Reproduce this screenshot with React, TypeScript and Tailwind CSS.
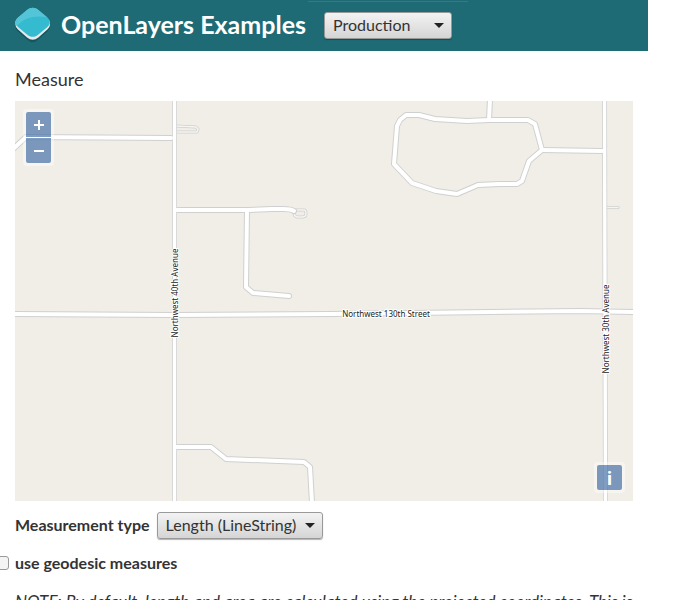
import type { ReactNode } from "react";

const halo = {
  fontFamily: '"Noto Sans", sans-serif',
  paintOrder: "stroke",
} as const;

const majorRoads = [
  "M174.5 101V501",
  "M604.5 101L605.5 501",
];

const roads = [
  "M12 150L26 137L171 138",
  "M15 314L174 315L330 314L580 311L633 312",
  "M177 210H247L272 209H283Q291 209 294 211",
  "M247 210L246 287L253 293L289 296",
  "M406 115H419L435 119L467 121L489 120L528 120L535 124L542 150L529 161L522 181L517 184L499 184L478 185L457 194L436 191L412 183L394 164L397 126L400 120Z",
  "M490 99L489 120",
  "M542 150L602 151",
  "M177 447L211 447L226 459L304 462L310 467L312 503",
];

const tracks = [
  "M176 126L196 127L198 129L197 132H176",
  "M296 210H304Q306 210 306 214Q306 217 302 217H297Q294 216 294 213Z",
  "M606 207.5H618",
];

function Roads() {
  return (
    <svg
      viewBox="15 101 618 400"
      preserveAspectRatio="xMidYMid slice"
      className="block h-full w-full"
      role="img"
      aria-label="Street map"
    >
      <g fill="none" strokeLinejoin="round" strokeLinecap="round">
        <g stroke="#cfcfcf" strokeWidth="3">
          {tracks.map((d) => <path key={d} d={d} />)}
        </g>
        <g stroke="#f6f5f2" strokeWidth="1.5">
          {tracks.map((d) => <path key={d} d={d} />)}
        </g>
        <g stroke="#d0d0d0">
          {roads.map((d) => <path key={d} d={d} strokeWidth="6" />)}
          {majorRoads.map((d) => <path key={d} d={d} strokeWidth="5" />)}
        </g>
        <g stroke="#fff">
          {roads.map((d) => <path key={d} d={d} strokeWidth="4" />)}
          {majorRoads.map((d) => <path key={d} d={d} strokeWidth="3.4" />)}
        </g>
      </g>
      <g fill="#222" stroke="#fff" strokeWidth="2" fontSize="8" textAnchor="middle" style={halo}>
        <text x="386" y="317">Northwest 130th Street</text>
        <text transform="translate(178 293) rotate(-90)">Northwest 40th Avenue</text>
        <text transform="translate(609 329) rotate(-90)">Northwest 30th Avenue</text>
      </g>
    </svg>
  );
}

function Logo() {
  return (
    <svg width="38" height="38" viewBox="0 0 38 38" aria-hidden="true" className="shrink-0">
      <path d="M2.4 19V21Q2.4 24.500 5 26.500L14 34.500Q19.700 40 25.400 34.500L34.400 26.500Q37 24.500 37 21V19Z" fill="#145560" />
      <path d="M2.400 16V19.500Q2.400 22.500 5 24.500L14 32.500Q19.700 37 25.400 32.500L34.400 24.500Q37 22.500 37 19.500V16Z" fill="#e6e8ea" />
      <path d="M5 12.500L14 5C17.500 2 22 2 25.400 5L34.400 12.500C37.800 15.500 37.800 19 34.400 22L25.400 29.500C22 32.600 17.500 32.600 14 29.500L5 22C1.600 19 1.600 15.500 5 12.500Z" fill="#35bbd0" />
      <path d="M5 12.500L14 5C17.500 2 22 2 25.400 5L34.400 12.500C24 10 11 12 4 21C1.600 18.500 2 15 5 12.500Z" fill="#54c5d7" />
    </svg>
  );
}

function Select({ id, label, width, children }: { id: string; label?: string; width: string; children: ReactNode }) {
  return (
    <span className={`relative flex ${width}`}>
      <select
        id={id}
        aria-label={label}
        className="h-[27px] w-full appearance-none rounded-[3px] border border-[#999] bg-linear-to-b from-[#f3f3f3] to-[#d5d5d5] pr-6 pb-[2px] pl-2 text-[16px] leading-5 text-[#333] shadow-[0_1px_1px_rgba(0,0,0,0.3)]"
      >
        {children}
      </select>
      <svg
        width="10"
        height="5"
        viewBox="0 0 10 5"
        aria-hidden="true"
        className="pointer-events-none absolute top-[11px] right-2"
      >
        <path d="M0 0H10L5 5Z" fill="#222" />
      </svg>
    </span>
  );
}

const control = "rounded-[4px] bg-white/40 p-[3px] absolute flex flex-col gap-px";
const controlButton =
  "flex size-[25px] items-center justify-center bg-[#003c88]/50 text-white";

export default function App() {
  return (
    <div className="mr-[52px] font-['Lato','Open_Sans',sans-serif] text-[#333]">
      <header className="flex h-[51px] bg-[#1f6b75] pl-[13px]">
        <a href="#home" className="flex items-center gap-[10px] pb-1 text-[25px] leading-8 font-bold text-white">
          <Logo />
          OpenLayers Examples
        </a>
        <div className="mt-px ml-[2px] w-40 border-t border-[#347a84] pt-[10px] pl-4">
          <Select id="build" label="Build" width="w-32">
            <option>Production</option>
            <option>Development</option>
          </Select>
        </div>
      </header>

      <main className="px-[15px] pt-[17px]">
        <h4 className="mb-[11px] text-[18px] leading-[22px]">Measure</h4>
        <div className="relative h-[400px] overflow-hidden bg-[#f1eee8]">
          <Roads />
          <div className={`${control} top-2 left-2`}>
            <button type="button" aria-label="Zoom in" className={`${controlButton} rounded-t-[2px]`}>
              <svg width="10" height="10" viewBox="0 0 10 10" aria-hidden="true">
                <path d="M5 0V10M0 5H10" stroke="currentColor" strokeWidth="2" />
              </svg>
            </button>
            <button type="button" aria-label="Zoom out" className={`${controlButton} rounded-b-[2px]`}>
              <svg width="10" height="10" viewBox="0 0 10 10" aria-hidden="true">
                <path d="M0 5H10" stroke="currentColor" strokeWidth="2" />
              </svg>
            </button>
          </div>
          <div className={`${control} right-2 bottom-2`}>
            <button
              type="button"
              className={`${controlButton} rounded-[2px] font-['Open_Sans',sans-serif] text-[18px] leading-6 font-bold`}
            >
              i
            </button>
          </div>
        </div>

        <form>
          <div className="mt-[11px] flex items-center gap-[7px]">
            <label htmlFor="type" className="pb-[2px] text-[16px] leading-5 font-bold">Measurement type</label>
            <Select id="type" width="w-[166px]">
              <option>Length (LineString)</option>
              <option>Area (Polygon)</option>
            </Select>
          </div>
          <div className="mt-[14px] -ml-5 flex items-center gap-[6px]">
            <input
              id="geodesic"
              type="checkbox"
              className="size-[14px] appearance-none rounded-[3px] border border-[#999] bg-[#f4f4f4] checked:bg-[#1f6b75]"
            />
            <label htmlFor="geodesic" className="text-[16px] leading-5 font-bold">use geodesic measures</label>
          </div>
          <p className="mt-[19px] text-[17px] leading-5 whitespace-nowrap italic">
            NOTE: By default, length and area are calculated using the projected coordinates. This is
          </p>
        </form>
      </main>
    </div>
  );
}
